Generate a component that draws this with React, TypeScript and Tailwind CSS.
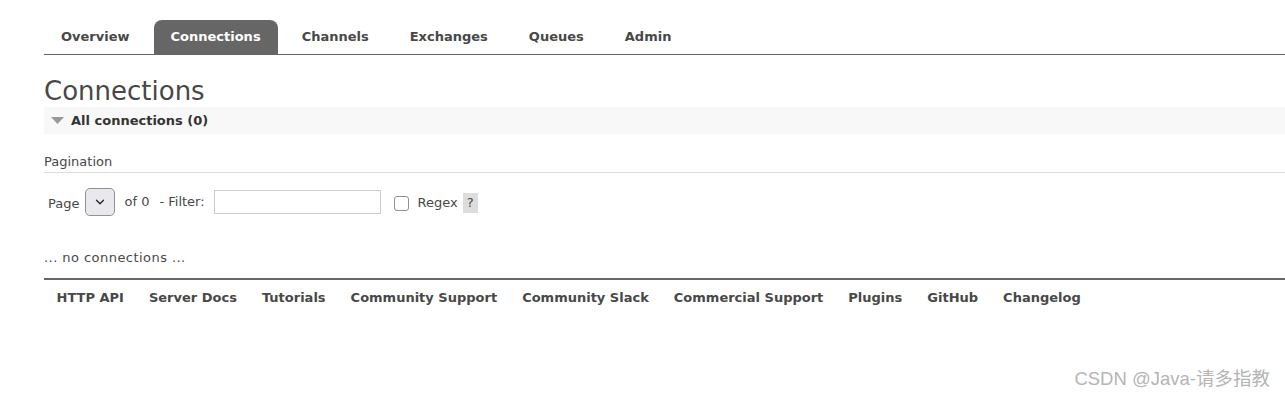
import { ChevronDown } from 'lucide-react'

const tabs = ['Overview', 'Connections', 'Channels', 'Exchanges', 'Queues', 'Admin']
const footerLinks = [
  'HTTP API',
  'Server Docs',
  'Tutorials',
  'Community Support',
  'Community Slack',
  'Commercial Support',
  'Plugins',
  'GitHub',
  'Changelog',
]

export default function App() {
  return (
    <div className="relative h-[401px] w-[1285px] overflow-hidden bg-white pl-[44px] font-['DejaVu_Sans',Verdana,sans-serif] text-[#484848]">
      <div className="flex h-[55px] items-end border-b border-[#666] pt-[20px]">
        {tabs.map((tab) => (
          <div
            key={tab}
            className={
              tab === 'Connections'
                ? 'mr-[7px] flex h-[34px] items-center rounded-t-[8px] bg-[#666] px-[17px] text-[13px] font-bold text-white'
                : 'mr-[7px] flex h-[34px] items-center px-[17px] text-[13px] font-bold text-[#484848]'
            }
          >
            {tab}
          </div>
        ))}
      </div>

      <h1 className="mt-[20px] text-[26px] leading-[32px] text-[#484848]">Connections</h1>
      <div className="flex h-[27px] items-center bg-[#f8f8f8] pl-[7px] text-[13px] font-bold text-[#333]">
        <svg width="13" height="8" viewBox="0 0 13 8" className="mr-[7px]">
          <polygon points="0,0 13,0 6.5,7" fill="#999" />
        </svg>
        All connections (0)
      </div>

      <div className="mt-[19px] border-b border-[#ddd] pb-[2px] text-[13px] leading-[17px]">Pagination</div>

      <div className="mt-[15px] flex items-center text-[13px]">
        <span className="ml-[4px] mt-[4px]">Page</span>
        <div className="ml-[6px] flex h-[28px] w-[30px] items-center justify-center rounded-[5px] border border-[#8f8f9d] bg-[#e9e9ed]">
          <ChevronDown size={14} strokeWidth={2.2} className="text-[#222]" />
        </div>
        <span className="ml-[9px]">of 0</span>
        <span className="ml-[10px]">- Filter:</span>
        <input className="ml-[9px] h-[24px] w-[167px] border border-[#ccc] bg-white outline-none" />
        <span className="ml-[13px] mt-[2px] inline-block h-[15px] w-[15px] rounded-[3px] border border-[#8f8f9d] bg-white" />
        <span className="ml-[9px] mt-[2px]">Regex</span>
        <span className="ml-[5px] mt-[2px] flex h-[20px] w-[15px] items-center justify-center bg-[#ddd] text-[13px]">?</span>
      </div>

      <div className="mt-[33px] text-[13px] leading-[17px] tracking-[0.45px]">... no connections ...</div>

      <div className="mt-[12px] flex border-t-2 border-[#666] pt-[9px]">
        {footerLinks.map((link) => (
          <span key={link} className="px-[12.5px] text-[13px] font-bold leading-[17px] text-[#484848]">
            {link}
          </span>
        ))}
      </div>

      <div className="absolute bottom-[8px] right-[15px] font-['Liberation_Sans','Noto_Sans_CJK_SC',sans-serif] text-[18.5px] text-[#b5b5b5]">
        CSDN @Java-请多指教
      </div>
    </div>
  )
}
